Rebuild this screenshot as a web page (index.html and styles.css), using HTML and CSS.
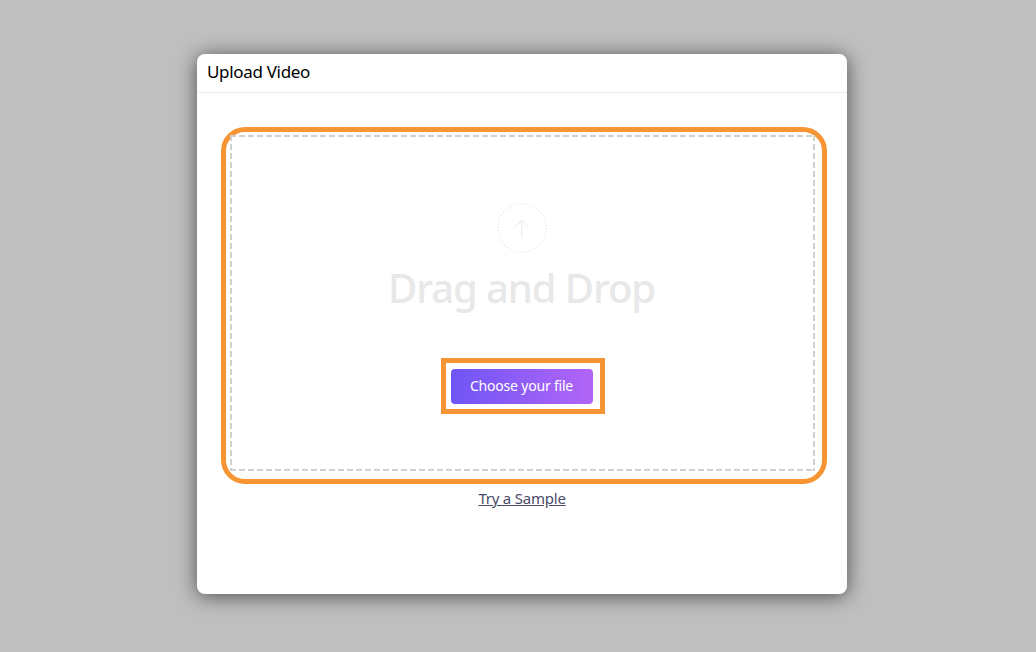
FILE: index.html
```html
<!DOCTYPE html>
<html lang="en">
<head>
<meta charset="utf-8">
<title>Upload Video</title>
<link rel="stylesheet" href="styles.css">
</head>
<body>
<div class="dialog">
  <header class="dialog-header"><h1 class="dialog-title">Upload Video</h1></header>
  <main class="dialog-body">
    <div class="highlight-zone">
      <div class="dropzone">
        <div class="upload-icon">
          <svg width="50" height="50" viewBox="0 0 50 50" fill="none">
            <circle cx="25" cy="25" r="24.3" stroke="#e6e6e6" stroke-width="1.2" stroke-dasharray="1.2 2.1"/>
            <path d="M24.7 35V17.5M17.5 24.7L24.7 17.5L31.9 24.7" stroke="#eeeeee" stroke-width="1.2"/>
          </svg>
        </div>
        <div class="drag-text">Drag and Drop</div>
        <div class="highlight-button">
          <button class="choose-button" type="button">Choose your file</button>
        </div>
      </div>
    </div>
    <a class="sample-link" href="#">Try a Sample</a>
  </main>
</div>
</body>
</html>
```
FILE: styles.css
```css
* { box-sizing: border-box; }
html, body { height: 100%; }
body {
  margin: 0;
  padding: 54px 0 0 197px;
  background: #bfbfbf;
  font-family: "Noto Sans", "Open Sans", sans-serif;
  overflow: hidden;
}
.dialog {
  width: 650px;
  height: 540px;
  background: #fff;
  border-radius: 8px;
  box-shadow: 0 2px 20px rgba(0, 0, 0, 0.6);
  overflow: hidden;
}
.dialog-header {
  height: 39px;
  padding: 0 10px 4px;
  display: flex;
  align-items: center;
  border-bottom: 1px solid #ebebeb;
}
.dialog-title {
  margin: 0;
  font-size: 17px;
  font-weight: 400;
  letter-spacing: -0.32px;
  color: #000;
}
.dialog-body {
  padding: 34px 20px 0 24px;
  display: flex;
  flex-direction: column;
  align-items: center;
}
.highlight-zone {
  width: 606px;
  height: 357px;
  padding: 3px 7px 8px 4px;
  border: 5px solid #f79535;
  border-radius: 24px;
}
.dropzone {
  height: 100%;
  --dash: #cdd2cf;
  background-image:
    repeating-linear-gradient(90deg, var(--dash) 0 6px, transparent 6px 9px),
    repeating-linear-gradient(90deg, var(--dash) 0 6px, transparent 6px 9px),
    repeating-linear-gradient(180deg, var(--dash) 0 6px, transparent 6px 9px),
    repeating-linear-gradient(180deg, var(--dash) 0 6px, transparent 6px 9px);
  background-size: 100% 2px, 100% 2px, 2px 100%, 2px 100%;
  background-position: 0 0, 0 100%, 0 0, 100% 0;
  background-repeat: no-repeat;
  display: flex;
  flex-direction: column;
  align-items: center;
  padding-top: 68px;
}
.upload-icon { height: 50px; margin-left: -1px; }
.upload-icon svg { display: block; }
.drag-text {
  margin: 7px 2px 0 0;
  font-size: 40px;
  line-height: 56px;
  font-weight: 500;
  letter-spacing: -1.1px;
  color: #e8e8e8;
  white-space: nowrap;
}
.highlight-button {
  margin: 42px 0 0;
  width: 164px;
  height: 56px;
  padding: 6px 6px 5px 5px;
  border: 5px solid #f79535;
}
.choose-button {
  display: block;
  width: 142px;
  height: 35px;
  padding: 0 0 2px;
  border: 0;
  border-radius: 4px;
  background: linear-gradient(90deg, #6f55f5, #b265f7);
  color: #fff;
  font-family: inherit;
  font-size: 14px;
  letter-spacing: -0.2px;
}
.sample-link {
  margin: 4px 4px 0 0;
  font-size: 15px;
  line-height: 20px;
  letter-spacing: -0.22px;
  color: #4a4a68;
  text-decoration: underline;
}
```
